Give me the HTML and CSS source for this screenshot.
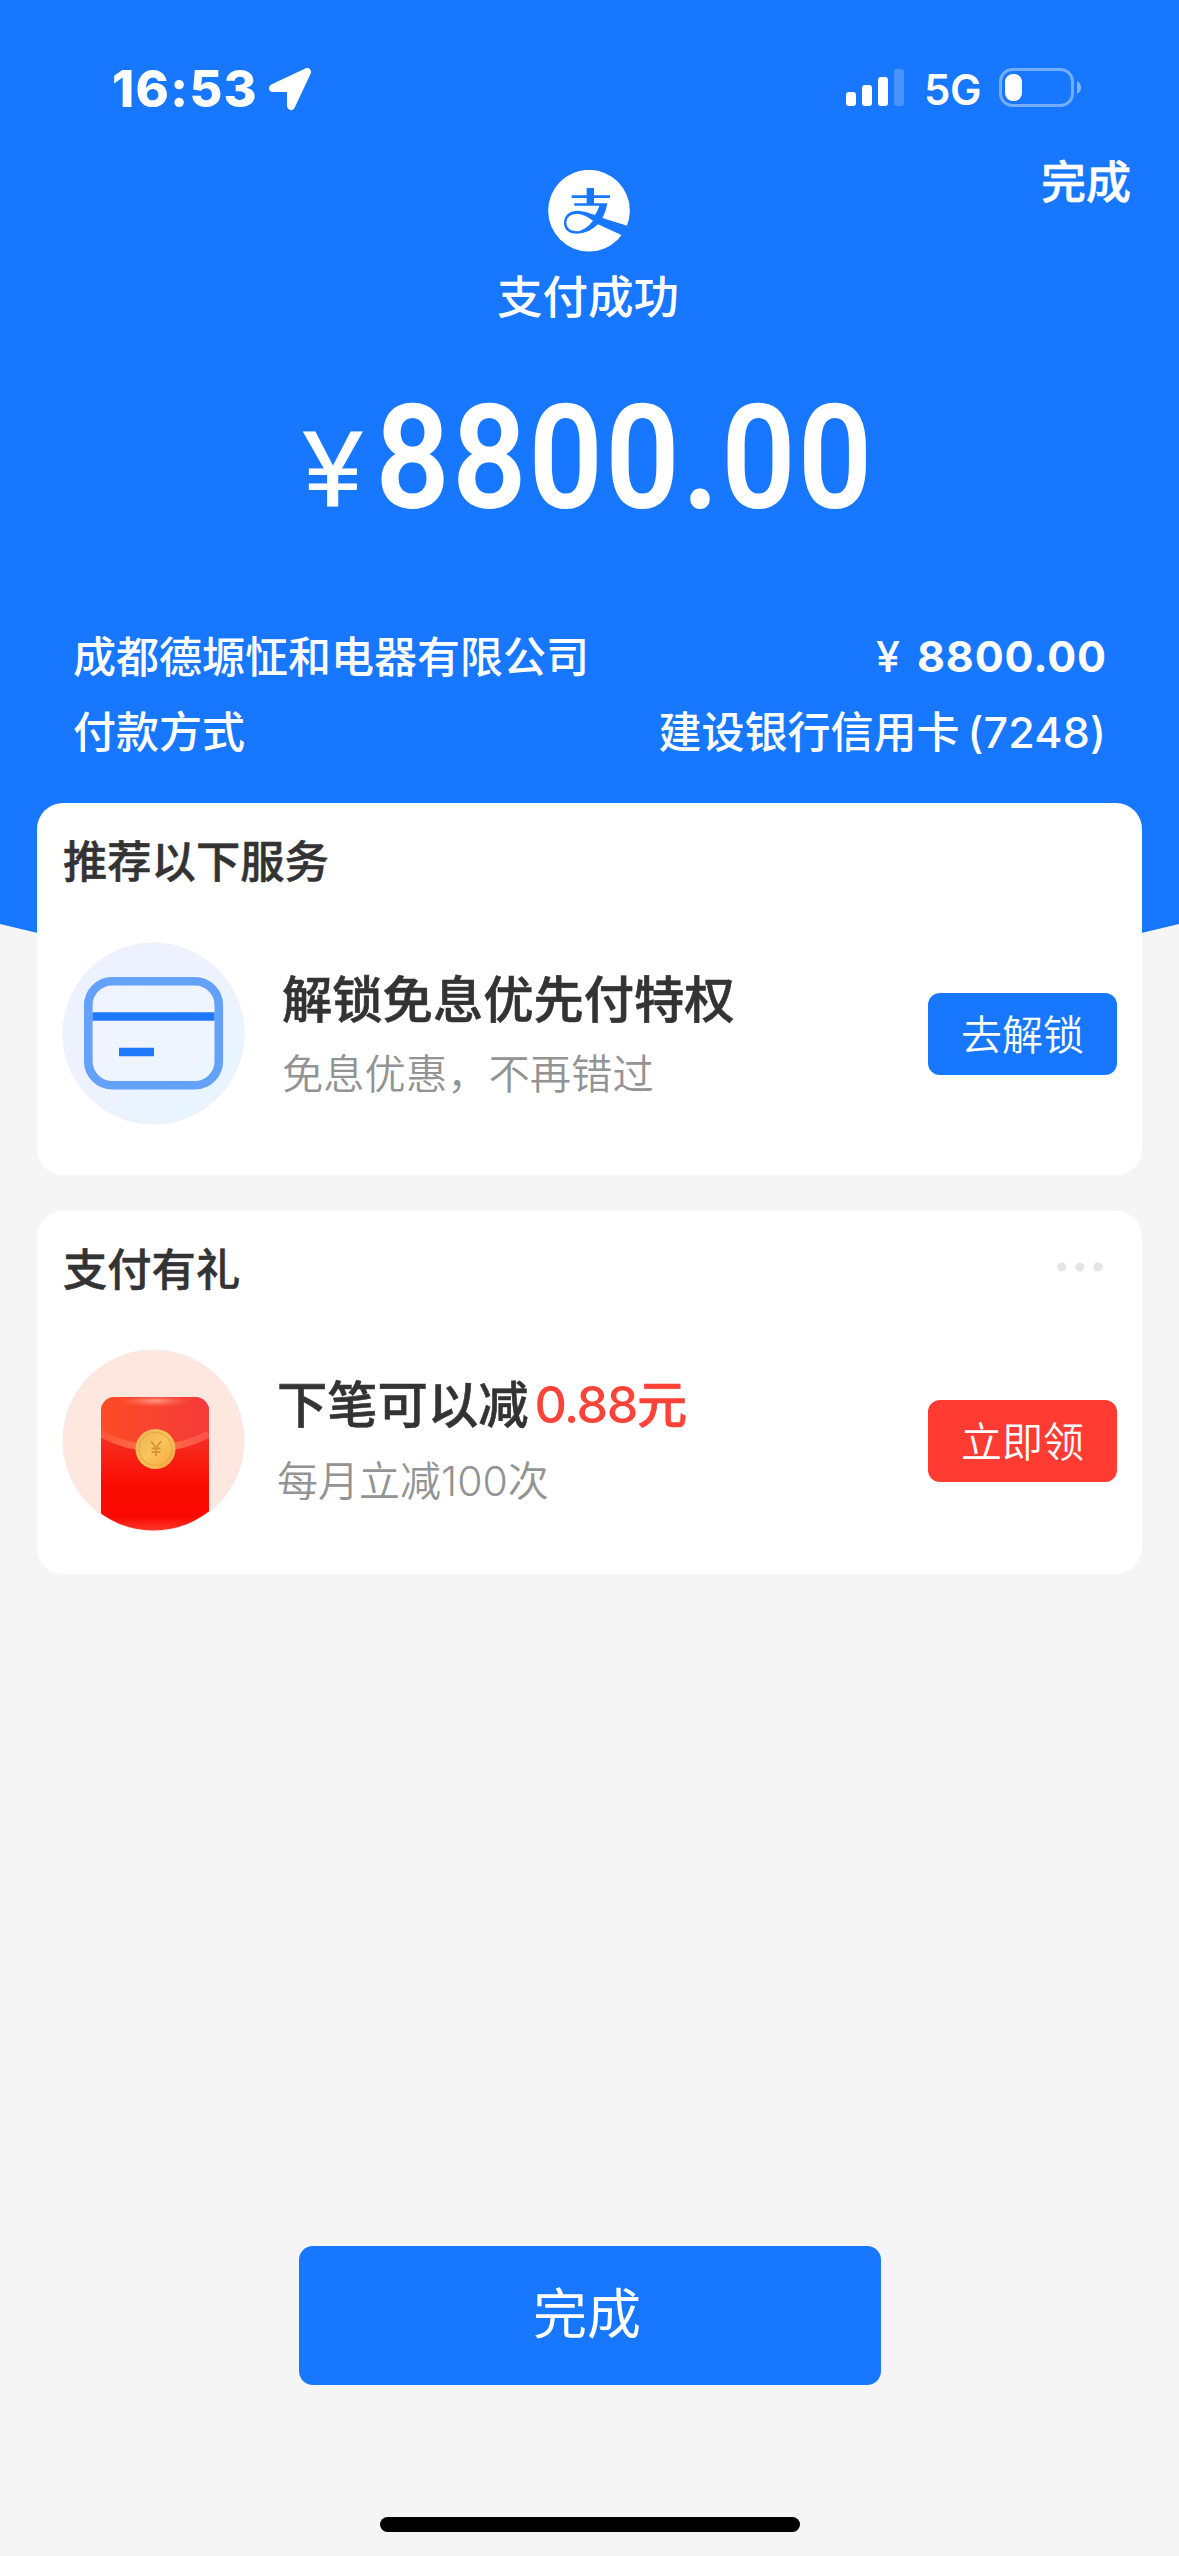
FILE: index.html
```html
<!DOCTYPE html>
<html lang="zh-CN">
<head>
<meta charset="utf-8">
<title>支付成功</title>
<link rel="stylesheet" href="styles.css">
</head>
<body>
<div class="screen">
  <svg class="backdrop" width="1179" height="960" viewBox="0 0 1179 960"><path d="M0 0H1179V924Q589.500 1070 0 924Z" fill="#1777ff"/></svg>

  <header class="status">
    <span class="time">16:53</span>
    <svg class="locate" width="43" height="43" viewBox="0 0 43 43"><path d="M4 20L38 4L22 38V20Z" fill="#fff" stroke="#fff" stroke-width="8" stroke-linejoin="round"/></svg>
    <svg class="signal" width="58" height="37" viewBox="0 0 58 37" fill="#fff"><rect y="23" width="10" height="14" rx="3"/><rect x="16" y="16" width="10" height="21" rx="3"/><rect x="32" y="8" width="10" height="29" rx="3"/><rect x="48" width="10" height="37" rx="3" opacity=".22"/></svg>
    <span class="network">5G</span>
    <svg class="battery" width="83" height="39" viewBox="0 0 83 39"><rect x="1.500" y="1.500" width="72" height="36" rx="12" fill="none" stroke="#fff" stroke-opacity=".4" stroke-width="3"/><rect x="6" y="6" width="17" height="27" rx="8" fill="#fff"/><path d="M78 13Q82 15 82 19.500T78 26Z" fill="#fff" opacity=".45"/></svg>
  </header>

  <section class="result">
    <a class="done-link">完成</a>
    <svg class="logo" width="82" height="82" viewBox="0 0 246 246"><circle cx="123" cy="122" r="122.500" fill="#fff"/><g fill="#1777ff"><path d="M116 54H138V76H186V84H138V100H178Q173 127 163 144L240 168V173L225 197L150 163Q122 191 87 191Q48 190 48 158Q50 122 92 122Q115 124 141 135Q150 120 154 107H79V100H116V84H71V76H116Z"/></g><path d="M135 152Q112 182 85 184Q55 182 55 157Q57 132 88 131Q110 133 135 152Z" fill="#fff"/></svg>
    <h1 class="result-title">支付成功</h1>
    <div class="amount"><span class="yen">¥</span><span class="figure">8800.00</span></div>
  </section>

  <section class="details">
    <div class="detail"><span class="key">成都德塬怔和电器有限公司</span><span class="money"><span class="small-yen">¥</span><b>8800.00</b></span></div>
    <div class="detail"><span class="key">付款方式</span><span class="key">建设银行信用卡<span class="tail">(7248)</span></span></div>
  </section>

  <main class="cards">
    <section class="card services">
      <h2 class="card-title">推荐以下服务</h2>
      <div class="offer">
        <svg class="art" width="183" height="183" viewBox="0 0 183 183">
          <defs><linearGradient id="pale" x1="0" y1="0" x2="1" y2="1"><stop offset="0" stop-color="#eef0ff"/><stop offset=".5" stop-color="#edf3fe"/><stop offset=".8" stop-color="#e9f5fe"/><stop offset="1" stop-color="#edf2fe"/></linearGradient></defs>
          <circle cx="91.500" cy="91.500" r="90.500" fill="url(#pale)" stroke="#f0f0f4"/>
          <rect x="26.300" y="39.300" width="130.500" height="104" rx="24" fill="#fff" fill-opacity=".15" stroke="#63a1fa" stroke-width="8.600"/>
          <path d="M30.500 74.500H152.500M57 110H92" stroke="#1f79f8" stroke-width="8.700"/>
        </svg>
        <div class="copy"><h3 class="headline">解锁免息优先付特权</h3><p class="note">免息优惠，不再错过</p></div>
        <button class="action">去解锁</button>
      </div>
    </section>

    <section class="card gift">
      <div class="card-head"><h2 class="card-title">支付有礼</h2><svg class="more" width="46" height="10" viewBox="0 0 46 10" fill="#e5e5e5"><circle cx="4.700" cy="5" r="4.600"/><circle cx="22.800" cy="5" r="4.600"/><circle cx="41" cy="5" r="4.600"/></svg></div>
      <div class="offer">
        <svg class="art" width="183" height="183" viewBox="0 0 183 183">
          <defs>
            <clipPath id="disc"><circle cx="91.500" cy="91.500" r="90"/></clipPath>
            <clipPath id="packet"><rect x="39" y="48" width="108" height="150" rx="14"/></clipPath>
            <linearGradient id="body" x1="0" y1="0" x2="0" y2="1"><stop offset="0" stop-color="#f83628"/><stop offset=".35" stop-color="#f62a1e"/><stop offset=".65" stop-color="#fb0d03"/><stop offset=".9" stop-color="#fa0a02"/><stop offset="1" stop-color="#fd3a2c"/></linearGradient>
            <linearGradient id="flap"><stop offset="0" stop-color="#fc4c24"/><stop offset="1" stop-color="#f53a3b"/></linearGradient>
            <linearGradient id="coin" x1="0" y1="0" x2="1" y2="1"><stop offset="0" stop-color="#e9b054"/><stop offset=".5" stop-color="#fbc45c"/><stop offset="1" stop-color="#f6a43b"/></linearGradient>
            <radialGradient id="glow"><stop offset="0" stop-color="#ff9b86"/><stop offset="1" stop-color="#ff6a50" stop-opacity="0"/></radialGradient>
            <linearGradient id="seam"><stop offset="0" stop-color="#fb5834"/><stop offset=".3" stop-color="#fc6843"/><stop offset=".7" stop-color="#fc6843"/><stop offset="1" stop-color="#fb504a"/></linearGradient>
          </defs>
          <circle cx="91.500" cy="91.500" r="90.500" fill="#fde7df" stroke="#f3eae8"/>
          <g clip-path="url(#disc)"><g clip-path="url(#packet)">
            <rect x="39" y="48" width="108" height="134" fill="url(#body)"/>
            <path d="M39 48H147V84Q93 112 39 84Z" fill="url(#flap)"/>
            <ellipse cx="93" cy="52" rx="36" ry="6" fill="url(#glow)"/>
            <path d="M39 85Q93 113 147 85" fill="none" stroke="url(#seam)" stroke-width="7"/>
          </g></g>
          <circle cx="93.500" cy="100" r="20" fill="url(#coin)"/>
          <circle cx="93.500" cy="100" r="16.500" fill="none" stroke="#e8aa45" stroke-width="1.200"/>
          <path d="M89 92L94 99L99 92M94 99V107M89.500 99.500H98.500M89.500 103H98.500" fill="none" stroke="#d99433" stroke-width="1.800"/>
        </svg>
        <div class="copy"><h3 class="headline">下笔可以减<span class="saving">0.88<span class="unit">元</span></span></h3><p class="note">每月立减<span class="count">100</span>次</p></div>
        <button class="action red">立即领</button>
      </div>
    </section>
  </main>

  <footer class="bottom">
    <button class="finish">完成</button>
    <div class="home-bar"></div>
  </footer>
</div>
</body>
</html>
```
FILE: styles.css
```css
* { box-sizing: border-box; }
body, h1, h2, h3, p { margin: 0; }
body { background: #f5f5f6; font-family: "Noto Sans CJK SC", sans-serif; color: #333; }
button { border: 0; padding: 0; font-family: inherit; color: #fff; }

.screen { position: relative; width: 1179px; height: 2556px; overflow: hidden; display: flex; flex-direction: column; white-space: nowrap; }
.backdrop { position: absolute; top: 0; left: 0; z-index: -1; }

.status { height: 150px; padding: 68px 97px 0 112px; display: flex; align-items: flex-start; font-family: Inter, sans-serif; color: #fff; }
.time { font-size: 50.5px; line-height: 41px; font-weight: 800; letter-spacing: 1.3px; width: 157px; }
.signal { margin: 1px 20px 0 auto; }
.network { font-size: 42px; line-height: 43px; font-weight: 600; letter-spacing: -.4px; width: 75px; }

.result { position: relative; height: 474px; padding-top: 20px; display: flex; flex-direction: column; align-items: center; color: #fff; }
.done-link { position: absolute; right: 48px; top: 0; font-size: 45px; line-height: 60px; font-weight: 500; -webkit-text-stroke: .5px; }
.logo { margin-right: 2px; }
.result-title { margin: 12px 3px 0 0; font-size: 45.5px; line-height: 60px; font-weight: 500; }
.amount { display: flex; align-items: baseline; width: 590px; margin-top: 50px; padding-left: 7px; font-family: Roboto, sans-serif; line-height: 170px; }
.yen { flex: none; font-size: 105px; font-weight: 400; width: 74px; transform: scaleX(1.12); transform-origin: 0 50%; }
.figure { flex: none; font-size: 142px; font-weight: 500; letter-spacing: 4px; -webkit-text-stroke: 2px; transform: scaleX(.905); transform-origin: 0 50%; }

.details { height: 179px; padding: 0 73px; color: #fff; font-size: 43px; font-weight: 500; }
.detail { display: flex; justify-content: space-between; height: 75px; line-height: 60px; }
.money { font-family: Inter, sans-serif; line-height: 64px; }
.small-yen { margin-right: 17px; }
.money b { letter-spacing: .9px; margin-right: -1px; }
.tail { font-family: Inter, sans-serif; margin-left: 8px; letter-spacing: .2px; }

.cards { padding: 0 37px; display: flex; flex-direction: column; gap: 36px; }
.card { background: #fff; border-radius: 26px; padding: 26px 25px 0 26px; }
.services { height: 372px; }
.gift { height: 363px; }
.card-head { display: flex; justify-content: space-between; }
.more { margin: 25px 14px 0 0; }
.card-title { font-size: 44.3px; line-height: 60px; font-weight: 500; -webkit-text-stroke: .5px; }
.offer { display: flex; align-items: center; height: 183px; margin-top: 53px; }
.gift .offer { margin-top: 52px; }
.art { margin-left: -1px; flex: none; }
.copy { margin-left: 37px; flex: 1; }
.gift .copy { margin-left: 32px; }
.headline { font-size: 50.3px; line-height: 74px; font-weight: 500; -webkit-text-stroke: .6px; }
.note { font-size: 41.3px; line-height: 76px; font-weight: 350; color: #939393; }
.gift .note { font-size: 41px; line-height: 73px; }
.saving { color: #fd4238; font-family: Inter, sans-serif; margin-left: 6px; letter-spacing: -1.5px; -webkit-text-stroke: 0; }
.unit { font-family: "Noto Sans CJK SC", sans-serif; -webkit-text-stroke: .5px; }
.count { font-family: Inter, sans-serif; font-weight: 350; }
.action { width: 189px; height: 82px; border-radius: 12px; background: #1777ff; font-size: 41px; line-height: 78px; padding-bottom: 4px; font-weight: 350; }
.red { background: #ff3b32; }

.bottom { margin-top: auto; height: 310px; display: flex; flex-direction: column; align-items: center; }
.finish { width: 582px; height: 139px; border-radius: 14px; background: #1777ff; font-size: 54px; font-weight: 400; line-height: 129px; padding: 0 5px 10px 0; }
.home-bar { width: 420px; height: 15px; border-radius: 8px; background: #000; margin-top: 132px; }
```
